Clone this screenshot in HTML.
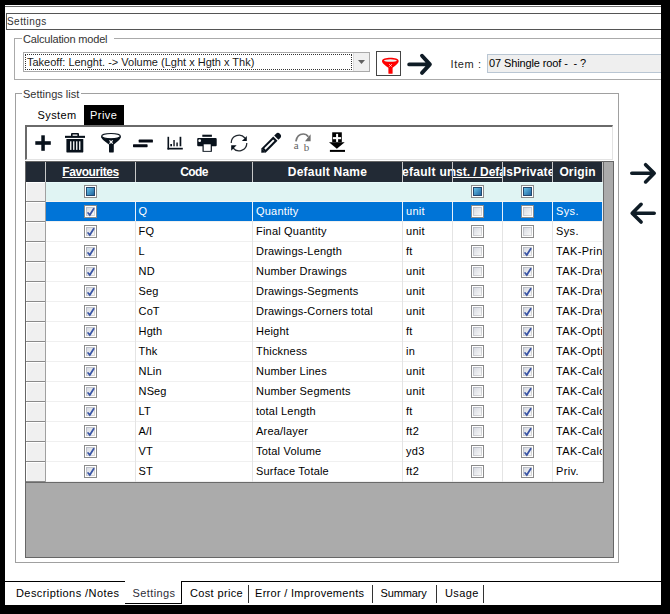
<!DOCTYPE html><html><head><meta charset="utf-8"><style>
html,body{margin:0;padding:0;width:670px;height:614px;overflow:hidden;background:#000}
.a{position:absolute;box-sizing:content-box}
.t{position:absolute;white-space:pre;font-family:"Liberation Sans",sans-serif}
svg.a{overflow:visible}
</style></head><body>
<div class="a" style="left:5px;top:5px;width:656px;height:600px;background:#fff"></div>
<div class="a" style="left:5px;top:6px;width:656px;height:1px;background:#6d6d6d"></div>
<div class="a" style="left:6px;top:13px;width:700px;height:15px;border:1px solid #555"></div>
<div class="t" style="left:7px;top:14.54px;font-size:10px;line-height:14px;font-weight:400;color:#333;letter-spacing:0.45px">Settings</div>
<div class="a" style="left:14px;top:38px;width:700px;height:40px;border:1px solid #aaa"></div>
<div class="a" style="left:22px;top:32px;width:92px;height:12px;background:#fff"></div>
<div class="t" style="left:23px;top:31.69px;font-size:11px;line-height:15px;font-weight:400;color:#333;letter-spacing:-0.18px">Calculation model</div>
<div class="a" style="left:23px;top:52px;width:345px;height:18px;border:1px solid #aaa;background:#fff"></div>
<div class="a" style="left:25px;top:54px;width:325px;height:14px;border:1px dotted #333"></div>
<div class="t" style="left:27px;top:54.69px;font-size:11px;line-height:15px;font-weight:400;color:#1a1a1a;">Takeoff: Lenght. -&gt; Volume (Lght x Hgth x Thk)</div>
<div class="a" style="left:353px;top:53px;width:15px;height:18px;background:#f0f0f0;border-left:1px solid #ddd"></div>
<svg class="a" style="left:358px;top:60px" width="7" height="4"><path d="M0 0H7L3.5 4Z" fill="#606060"/></svg>
<div class="a" style="left:376px;top:51px;width:23px;height:23px;border:1px solid #444;background:#fff"></div>
<svg class="a" style="left:0;top:0" width="670" height="614" viewBox="0 0 670 614">
<path d="M382 61.2 C382 58.6 386 57.8 390.4 57.8 C394.8 57.8 398.7 58.6 398.7 61.2 C398.7 62.4 396.6 65 392.6 67.8 V73.2 Q392.6 73.8 392 73.8 H389 Q388.4 73.8 388.4 73.2 V67.8 C384.2 65 382 62.4 382 61.2 Z" fill="#f00"/>
<ellipse cx="390.4" cy="60.6" rx="6.5" ry="1.25" fill="#e8f4f4"/>
<path d="M389.1 64.1 L391.9 66.9 M391.9 64.1 L389.1 66.9" stroke="#fff" stroke-width="0.9" stroke-dasharray="1 0.6"/>
</svg>
<svg class="a" style="left:405px;top:52px" width="30" height="25" viewBox="0 0 30 25">
<path d="M4.2 12.4 H24 M17 3.8 L24.9 12.4 L17 20.9" stroke="#0f1c26" stroke-width="3.9" fill="none" stroke-linecap="round" stroke-linejoin="round"/>
</svg>
<div class="t" style="left:450.5px;top:56.69px;font-size:11px;line-height:15px;font-weight:400;color:#1e1e1e;letter-spacing:0.6px">Item :</div>
<div class="a" style="left:487px;top:54px;width:200px;height:17px;border:1px solid #b9c6d3;background:#efefef"></div>
<div class="t" style="left:489px;top:55.69px;font-size:11px;line-height:15px;font-weight:400;color:#000;letter-spacing:-0.12px">07 Shingle roof -&nbsp; - ?</div>
<div class="a" style="left:15px;top:93px;width:602px;height:468px;border:1px solid #a0a0a0"></div>
<div class="a" style="left:22px;top:87px;width:59px;height:12px;background:#fff"></div>
<div class="t" style="left:23px;top:86.69px;font-size:11px;line-height:15px;font-weight:400;color:#333;">Settings list</div>
<div class="t" style="left:37.5px;top:107.69px;font-size:11px;line-height:15px;font-weight:400;color:#000;letter-spacing:0.4px">System</div>
<div class="a" style="left:84px;top:105px;width:40px;height:20px;background:#000"></div>
<div class="t" style="left:90px;top:107.69px;font-size:11px;line-height:15px;font-weight:400;color:#fff;letter-spacing:0.45px">Prive</div>
<div class="a" style="left:25px;top:125px;width:585px;height:32px;border-top:2px solid #6a6a6a;border-left:2px solid #6a6a6a;border-right:1px solid #e3e3e3;border-bottom:1px solid #e3e3e3;background:#fff"></div>
<svg class="a" style="left:0;top:0" width="670" height="614" viewBox="0 0 670 614">
<g fill="#08111b">
<rect x="35.3" y="141.2" width="15.5" height="3.6"/>
<rect x="41.3" y="135.3" width="3.5" height="15.5"/>
</g>
<g fill="#08111b">
<path d="M71 136 V134 Q71 133 72 133 H78 Q79 133 79 134 V136 Z M72.6 134.6 V136 H77.4 V134.6 Z" fill-rule="evenodd"/>
<rect x="65" y="135.8" width="20" height="2.1"/>
<path d="M66.4 139 H83.3 V151.4 Q83.3 152.6 82.1 152.6 H67.6 Q66.4 152.6 66.4 151.4 Z"/>
</g>
<g fill="#fff"><rect x="70.1" y="141.3" width="1.3" height="8.6"/><rect x="73.1" y="141.3" width="1.3" height="8.6"/><rect x="76.1" y="141.3" width="1.3" height="8.6"/><rect x="79.1" y="141.3" width="1.3" height="8.6"/></g>
<g>
<path d="M101 136.2 C101 139.5 106.5 142 109 144.6 V151.4 Q109 152.6 110.2 152.6 H112.6 Q113.8 152.6 113.8 151.4 V144.6 C116.3 142 121 139.5 121 136.2 Z" fill="#08111b"/>
<ellipse cx="111" cy="136.1" rx="9.3" ry="2.6" fill="#fff" stroke="#08111b" stroke-width="1.1"/>
<path d="M109.5 140.4 L112.7 143.6 M112.7 140.4 L109.5 143.6" stroke="#fff" stroke-width="1.3"/>
</g>
<g fill="#050a14">
<rect x="138.7" y="139.6" width="14.2" height="2.9" rx="0.6"/>
<rect x="133" y="144.3" width="14.6" height="2.9" rx="0.6"/>
</g>
<g fill="#08111b">
<rect x="167.5" y="136.8" width="1.6" height="12.7"/>
<rect x="167.5" y="147.8" width="15.3" height="1.7"/>
<rect x="170.3" y="144" width="1.7" height="2.3"/>
<rect x="173.2" y="140" width="1.7" height="6.3" fill="#3a3f46"/>
<rect x="176.2" y="142.5" width="1.8" height="3.8" fill="#3a3f46"/>
<rect x="179.6" y="136.8" width="1.7" height="9.5"/>
</g>
<g fill="#08111b">
<rect x="202.3" y="134.7" width="9.6" height="2.1"/>
<rect x="197.2" y="138" width="19.5" height="8.3" rx="1"/>
<rect x="202.5" y="143.8" width="9.4" height="8" />
</g>
<rect x="203.7" y="144.3" width="7" height="6.6" fill="#fff"/>
<circle cx="199.7" cy="140.7" r="1.35" fill="#fff"/>
<g stroke="#22282f" stroke-width="1.25" fill="none">
<path d="M231.2 143 A7.8 7.8 0 0 1 244.97 137.99"/>
<path d="M246.8 143 A7.8 7.8 0 0 1 233.03 148.01"/>
</g>
<g fill="#08111b">
<path d="M246.8 136 V140.9 H241.9 Z"/>
<path d="M231.2 145.3 H236.6 L231.2 150.8 Z"/>
</g>
<g transform="translate(271.15 142.8) rotate(-45)">
<path d="M-10.8 -3 L-13.9 0 L-10.8 3 Z" fill="#08111b"/>
<rect x="-10.9" y="-3" width="16.9" height="6" fill="#08111b"/>
<rect x="-8.8" y="-0.95" width="12.6" height="1.9" fill="#fff"/>
<path d="M7.3 -3 H9.6 A3 3 0 0 1 9.6 3 H7.3 Z" fill="#08111b"/>
</g>
<g fill="#7a7a7a">
<path d="M295.9 141.3 Q297.2 134 303.2 134 Q306.5 134 308.3 136.8" stroke="#777" stroke-width="1.7" fill="none"/>
<path d="M310.6 134.3 V141.2 H305 Z" fill="#6e6e6e"/>
</g>
<text x="293.8" y="148.7" font-family="Liberation Serif" font-size="11" fill="#606060">a</text>
<text x="303.8" y="151" font-family="Liberation Serif" font-size="11" fill="#606060">b</text>
<g fill="#000">
<rect x="332.2" y="132.3" width="9.6" height="10"/>
<path d="M329 142.2 H344.7 L336.85 148.7 Z"/>
<rect x="329.9" y="149.9" width="15.1" height="2"/>
</g>
<g fill="#fff"><rect x="332.9" y="137.1" width="8.2" height="2.1"/><rect x="336.1" y="133.9" width="2" height="8"/></g>
</svg>
<div class="a" style="left:25px;top:161px;width:587px;height:395px;border:1px solid #666;background:#ababab"></div>
<div class="a" style="left:26px;top:162px;width:577px;height:20px;background:#222a35"></div>
<div class="a" style="left:45px;top:162px;width:1px;height:20px;background:#c8c8c8"></div>
<div class="a" style="left:135px;top:162px;width:1px;height:20px;background:#c8c8c8"></div>
<div class="a" style="left:252px;top:162px;width:1px;height:20px;background:#c8c8c8"></div>
<div class="a" style="left:402px;top:162px;width:1px;height:20px;background:#c8c8c8"></div>
<div class="a" style="left:452px;top:162px;width:1px;height:20px;background:#c8c8c8"></div>
<div class="a" style="left:502px;top:162px;width:1px;height:20px;background:#c8c8c8"></div>
<div class="a" style="left:552px;top:162px;width:1px;height:20px;background:#c8c8c8"></div>
<div class="a" style="left:602px;top:162px;width:1px;height:20px;background:#c8c8c8"></div>
<div class="a" style="left:46px;top:162px;width:89px;height:20px;overflow:hidden"><div class="t" style="left:-105.5px;top:1.84px;font-size:12px;line-height:16px;font-weight:700;color:#fff;width:300px;text-align:center;white-space:nowrap;text-decoration:underline;letter-spacing:-0.43px">Favourites</div></div>
<div class="a" style="left:136px;top:162px;width:116px;height:20px;overflow:hidden"><div class="t" style="left:-92.0px;top:1.84px;font-size:12px;line-height:16px;font-weight:700;color:#fff;width:300px;text-align:center;white-space:nowrap;letter-spacing:-0.6px">Code</div></div>
<div class="a" style="left:253px;top:162px;width:149px;height:20px;overflow:hidden"><div class="t" style="left:-75.5px;top:1.84px;font-size:12px;line-height:16px;font-weight:700;color:#fff;width:300px;text-align:center;white-space:nowrap;letter-spacing:0.22px">Default Name</div></div>
<div class="a" style="left:403px;top:162px;width:49px;height:20px;overflow:hidden"><div class="t" style="left:-10px;top:1.84px;font-size:12px;line-height:16px;font-weight:700;color:#fff;white-space:nowrap;letter-spacing:0.3px">Default unit</div></div>
<div class="a" style="left:453px;top:162px;width:49px;height:20px;overflow:hidden"><div class="t" style="left:-7.699999999999989px;top:1.84px;font-size:12px;line-height:16px;font-weight:700;color:#fff;white-space:nowrap;text-decoration:underline;letter-spacing:0px">Inst. / Default</div></div>
<div class="a" style="left:503px;top:162px;width:49px;height:20px;overflow:hidden"><div class="t" style="left:-0.19999999999998863px;top:1.84px;font-size:12px;line-height:16px;font-weight:700;color:#fff;white-space:nowrap;letter-spacing:0.2px">IsPrivate</div></div>
<div class="a" style="left:553px;top:162px;width:49px;height:20px;overflow:hidden"><div class="t" style="left:-125.5px;top:1.84px;font-size:12px;line-height:16px;font-weight:700;color:#fff;width:300px;text-align:center;white-space:nowrap;letter-spacing:0.15px">Origin</div></div>
<div class="a" style="left:26px;top:182px;width:577px;height:300px;background:#fff"></div>
<div class="a" style="left:46px;top:182px;width:557px;height:19px;background:#e0f4f3"></div>
<div class="a" style="left:26px;top:182px;width:19px;height:19px;background:#f0f0f0;border-top:1px solid #fff;border-left:1px solid #fff;box-sizing:border-box"></div>
<div class="a" style="left:26px;top:201px;width:20px;height:1px;background:#8a8a8a"></div>
<div class="a" style="left:26px;top:202px;width:19px;height:19px;background:#f0f0f0;border-top:1px solid #fff;border-left:1px solid #fff;box-sizing:border-box"></div>
<div class="a" style="left:26px;top:221px;width:20px;height:1px;background:#8a8a8a"></div>
<div class="a" style="left:26px;top:222px;width:19px;height:19px;background:#f0f0f0;border-top:1px solid #fff;border-left:1px solid #fff;box-sizing:border-box"></div>
<div class="a" style="left:26px;top:241px;width:20px;height:1px;background:#8a8a8a"></div>
<div class="a" style="left:26px;top:242px;width:19px;height:19px;background:#f0f0f0;border-top:1px solid #fff;border-left:1px solid #fff;box-sizing:border-box"></div>
<div class="a" style="left:26px;top:261px;width:20px;height:1px;background:#8a8a8a"></div>
<div class="a" style="left:26px;top:262px;width:19px;height:19px;background:#f0f0f0;border-top:1px solid #fff;border-left:1px solid #fff;box-sizing:border-box"></div>
<div class="a" style="left:26px;top:281px;width:20px;height:1px;background:#8a8a8a"></div>
<div class="a" style="left:26px;top:282px;width:19px;height:19px;background:#f0f0f0;border-top:1px solid #fff;border-left:1px solid #fff;box-sizing:border-box"></div>
<div class="a" style="left:26px;top:301px;width:20px;height:1px;background:#8a8a8a"></div>
<div class="a" style="left:26px;top:302px;width:19px;height:19px;background:#f0f0f0;border-top:1px solid #fff;border-left:1px solid #fff;box-sizing:border-box"></div>
<div class="a" style="left:26px;top:321px;width:20px;height:1px;background:#8a8a8a"></div>
<div class="a" style="left:26px;top:322px;width:19px;height:19px;background:#f0f0f0;border-top:1px solid #fff;border-left:1px solid #fff;box-sizing:border-box"></div>
<div class="a" style="left:26px;top:341px;width:20px;height:1px;background:#8a8a8a"></div>
<div class="a" style="left:26px;top:342px;width:19px;height:19px;background:#f0f0f0;border-top:1px solid #fff;border-left:1px solid #fff;box-sizing:border-box"></div>
<div class="a" style="left:26px;top:361px;width:20px;height:1px;background:#8a8a8a"></div>
<div class="a" style="left:26px;top:362px;width:19px;height:19px;background:#f0f0f0;border-top:1px solid #fff;border-left:1px solid #fff;box-sizing:border-box"></div>
<div class="a" style="left:26px;top:381px;width:20px;height:1px;background:#8a8a8a"></div>
<div class="a" style="left:26px;top:382px;width:19px;height:19px;background:#f0f0f0;border-top:1px solid #fff;border-left:1px solid #fff;box-sizing:border-box"></div>
<div class="a" style="left:26px;top:401px;width:20px;height:1px;background:#8a8a8a"></div>
<div class="a" style="left:26px;top:402px;width:19px;height:19px;background:#f0f0f0;border-top:1px solid #fff;border-left:1px solid #fff;box-sizing:border-box"></div>
<div class="a" style="left:26px;top:421px;width:20px;height:1px;background:#8a8a8a"></div>
<div class="a" style="left:26px;top:422px;width:19px;height:19px;background:#f0f0f0;border-top:1px solid #fff;border-left:1px solid #fff;box-sizing:border-box"></div>
<div class="a" style="left:26px;top:441px;width:20px;height:1px;background:#8a8a8a"></div>
<div class="a" style="left:26px;top:442px;width:19px;height:19px;background:#f0f0f0;border-top:1px solid #fff;border-left:1px solid #fff;box-sizing:border-box"></div>
<div class="a" style="left:26px;top:461px;width:20px;height:1px;background:#8a8a8a"></div>
<div class="a" style="left:26px;top:462px;width:19px;height:19px;background:#f0f0f0;border-top:1px solid #fff;border-left:1px solid #fff;box-sizing:border-box"></div>
<div class="a" style="left:26px;top:481px;width:20px;height:1px;background:#8a8a8a"></div>
<div class="a" style="left:45px;top:182px;width:1px;height:300px;background:#a0a0a0"></div>
<div class="a" style="left:46px;top:221px;width:557px;height:1px;background:#f0f0f0"></div>
<div class="a" style="left:46px;top:241px;width:557px;height:1px;background:#f0f0f0"></div>
<div class="a" style="left:46px;top:261px;width:557px;height:1px;background:#f0f0f0"></div>
<div class="a" style="left:46px;top:281px;width:557px;height:1px;background:#f0f0f0"></div>
<div class="a" style="left:46px;top:301px;width:557px;height:1px;background:#f0f0f0"></div>
<div class="a" style="left:46px;top:321px;width:557px;height:1px;background:#f0f0f0"></div>
<div class="a" style="left:46px;top:341px;width:557px;height:1px;background:#f0f0f0"></div>
<div class="a" style="left:46px;top:361px;width:557px;height:1px;background:#f0f0f0"></div>
<div class="a" style="left:46px;top:381px;width:557px;height:1px;background:#f0f0f0"></div>
<div class="a" style="left:46px;top:401px;width:557px;height:1px;background:#f0f0f0"></div>
<div class="a" style="left:46px;top:421px;width:557px;height:1px;background:#f0f0f0"></div>
<div class="a" style="left:46px;top:441px;width:557px;height:1px;background:#f0f0f0"></div>
<div class="a" style="left:46px;top:461px;width:557px;height:1px;background:#f0f0f0"></div>
<div class="a" style="left:46px;top:481px;width:557px;height:1px;background:#f0f0f0"></div>
<div class="a" style="left:46px;top:201px;width:557px;height:1px;background:#f7f5f0"></div>
<div class="a" style="left:46px;top:182px;width:557px;height:1px;background:#e9fbfb"></div>
<div class="a" style="left:46px;top:202px;width:556px;height:19px;background:#0074d7"></div>
<div class="a" style="left:135px;top:202px;width:1px;height:280px;background:#e4e4e4"></div>
<div class="a" style="left:252px;top:202px;width:1px;height:280px;background:#e4e4e4"></div>
<div class="a" style="left:402px;top:202px;width:1px;height:280px;background:#e4e4e4"></div>
<div class="a" style="left:452px;top:202px;width:1px;height:280px;background:#e4e4e4"></div>
<div class="a" style="left:502px;top:202px;width:1px;height:280px;background:#e4e4e4"></div>
<div class="a" style="left:552px;top:202px;width:1px;height:280px;background:#e4e4e4"></div>
<div class="a" style="left:602px;top:202px;width:1px;height:280px;background:#e4e4e4"></div>
<div class="a" style="left:135px;top:202px;width:1px;height:19px;background:#e8f1fb"></div>
<div class="a" style="left:252px;top:202px;width:1px;height:19px;background:#e8f1fb"></div>
<div class="a" style="left:402px;top:202px;width:1px;height:19px;background:#e8f1fb"></div>
<div class="a" style="left:452px;top:202px;width:1px;height:19px;background:#e8f1fb"></div>
<div class="a" style="left:502px;top:202px;width:1px;height:19px;background:#e8f1fb"></div>
<div class="a" style="left:552px;top:202px;width:1px;height:19px;background:#e8f1fb"></div>
<div class="a" style="left:602px;top:202px;width:1px;height:19px;background:#e8f1fb"></div>
<div class="a" style="left:603px;top:162px;width:1px;height:321px;background:#6a6a6a"></div>
<div class="a" style="left:26px;top:482px;width:578px;height:1px;background:#6a6a6a"></div>
<svg width="0" height="0" style="position:absolute"><defs>
<linearGradient id="gi" x1="0" y1="0" x2="1" y2="1"><stop offset="0" stop-color="#6cc8ee"/><stop offset="1" stop-color="#1a5f9a"/></linearGradient>
<linearGradient id="gc" x1="0" y1="0" x2="1" y2="1"><stop offset="0" stop-color="#d6d9e0"/><stop offset="1" stop-color="#fafafa"/></linearGradient><linearGradient id="gs" x1="0" y1="0" x2="1" y2="1"><stop offset="0" stop-color="#b8bcc6"/><stop offset="1" stop-color="#d8d8d8"/></linearGradient>
</defs></svg>
<svg class="a" style="left:84px;top:185px" width="13" height="13" viewBox="0 0 13 13"><rect x="0.5" y="0.5" width="12" height="12" fill="#fff" stroke="#8a8a8a"/><rect x="2.5" y="2.5" width="8" height="8" fill="url(#gi)" stroke="#23486e" stroke-width="1"/></svg>
<svg class="a" style="left:471px;top:185px" width="13" height="13" viewBox="0 0 13 13"><rect x="0.5" y="0.5" width="12" height="12" fill="#fff" stroke="#8a8a8a"/><rect x="2.5" y="2.5" width="8" height="8" fill="url(#gi)" stroke="#23486e" stroke-width="1"/></svg>
<svg class="a" style="left:521px;top:185px" width="13" height="13" viewBox="0 0 13 13"><rect x="0.5" y="0.5" width="12" height="12" fill="#fff" stroke="#8a8a8a"/><rect x="2.5" y="2.5" width="8" height="8" fill="url(#gi)" stroke="#23486e" stroke-width="1"/></svg>
<svg class="a" style="left:84px;top:205px" width="13" height="13" viewBox="0 0 13 13"><rect x="0.5" y="0.5" width="12" height="12" fill="#fff" stroke="#8a8a8a"/><rect x="2.5" y="2.5" width="8" height="8" fill="url(#gc)" stroke="url(#gs)" stroke-width="1"/><path d="M4.1 8 L5.8 10 L9.7 3.7" stroke="#3a55a5" stroke-width="1.8" fill="none" stroke-linecap="round" stroke-linejoin="miter"/></svg>
<svg class="a" style="left:471px;top:205px" width="13" height="13" viewBox="0 0 13 13"><rect x="0.5" y="0.5" width="12" height="12" fill="#fff" stroke="#8a8a8a"/><rect x="2.5" y="2.5" width="8" height="8" fill="url(#gc)" stroke="url(#gs)" stroke-width="1"/></svg>
<svg class="a" style="left:521px;top:205px" width="13" height="13" viewBox="0 0 13 13"><rect x="0.5" y="0.5" width="12" height="12" fill="#fff" stroke="#8a8a8a"/><rect x="2.5" y="2.5" width="8" height="8" fill="url(#gc)" stroke="url(#gs)" stroke-width="1"/></svg>
<div class="t" style="left:138.6px;top:203.69px;font-size:11px;line-height:15px;font-weight:400;color:#fff;letter-spacing:0.1px">Q</div>
<div class="t" style="left:256px;top:203.69px;font-size:11px;line-height:15px;font-weight:400;color:#fff;letter-spacing:0.2px">Quantity</div>
<div class="t" style="left:406px;top:203.69px;font-size:11px;line-height:15px;font-weight:400;color:#fff;letter-spacing:0.3px">unit</div>
<div class="a" style="left:553px;top:202px;width:49px;height:19px;overflow:hidden"><div class="t" style="left:3px;top:1.69px;font-size:11px;line-height:15px;font-weight:400;color:#fff;white-space:nowrap;letter-spacing:0.35px">Sys.</div></div>
<svg class="a" style="left:84px;top:225px" width="13" height="13" viewBox="0 0 13 13"><rect x="0.5" y="0.5" width="12" height="12" fill="#fff" stroke="#8a8a8a"/><rect x="2.5" y="2.5" width="8" height="8" fill="url(#gc)" stroke="url(#gs)" stroke-width="1"/><path d="M4.1 8 L5.8 10 L9.7 3.7" stroke="#3a55a5" stroke-width="1.8" fill="none" stroke-linecap="round" stroke-linejoin="miter"/></svg>
<svg class="a" style="left:471px;top:225px" width="13" height="13" viewBox="0 0 13 13"><rect x="0.5" y="0.5" width="12" height="12" fill="#fff" stroke="#8a8a8a"/><rect x="2.5" y="2.5" width="8" height="8" fill="url(#gc)" stroke="url(#gs)" stroke-width="1"/></svg>
<svg class="a" style="left:521px;top:225px" width="13" height="13" viewBox="0 0 13 13"><rect x="0.5" y="0.5" width="12" height="12" fill="#fff" stroke="#8a8a8a"/><rect x="2.5" y="2.5" width="8" height="8" fill="url(#gc)" stroke="url(#gs)" stroke-width="1"/></svg>
<div class="t" style="left:138.6px;top:223.69px;font-size:11px;line-height:15px;font-weight:400;color:#000;letter-spacing:0.1px">FQ</div>
<div class="t" style="left:256px;top:223.69px;font-size:11px;line-height:15px;font-weight:400;color:#000;letter-spacing:0.2px">Final Quantity</div>
<div class="t" style="left:406px;top:223.69px;font-size:11px;line-height:15px;font-weight:400;color:#000;letter-spacing:0.3px">unit</div>
<div class="a" style="left:553px;top:222px;width:49px;height:19px;overflow:hidden"><div class="t" style="left:3px;top:1.69px;font-size:11px;line-height:15px;font-weight:400;color:#000;white-space:nowrap;letter-spacing:0.35px">Sys.</div></div>
<svg class="a" style="left:84px;top:245px" width="13" height="13" viewBox="0 0 13 13"><rect x="0.5" y="0.5" width="12" height="12" fill="#fff" stroke="#8a8a8a"/><rect x="2.5" y="2.5" width="8" height="8" fill="url(#gc)" stroke="url(#gs)" stroke-width="1"/><path d="M4.1 8 L5.8 10 L9.7 3.7" stroke="#3a55a5" stroke-width="1.8" fill="none" stroke-linecap="round" stroke-linejoin="miter"/></svg>
<svg class="a" style="left:471px;top:245px" width="13" height="13" viewBox="0 0 13 13"><rect x="0.5" y="0.5" width="12" height="12" fill="#fff" stroke="#8a8a8a"/><rect x="2.5" y="2.5" width="8" height="8" fill="url(#gc)" stroke="url(#gs)" stroke-width="1"/></svg>
<svg class="a" style="left:521px;top:245px" width="13" height="13" viewBox="0 0 13 13"><rect x="0.5" y="0.5" width="12" height="12" fill="#fff" stroke="#8a8a8a"/><rect x="2.5" y="2.5" width="8" height="8" fill="url(#gc)" stroke="url(#gs)" stroke-width="1"/><path d="M4.1 8 L5.8 10 L9.7 3.7" stroke="#3a55a5" stroke-width="1.8" fill="none" stroke-linecap="round" stroke-linejoin="miter"/></svg>
<div class="t" style="left:138.6px;top:243.69px;font-size:11px;line-height:15px;font-weight:400;color:#000;letter-spacing:0.1px">L</div>
<div class="t" style="left:256px;top:243.69px;font-size:11px;line-height:15px;font-weight:400;color:#000;letter-spacing:0.2px">Drawings-Length</div>
<div class="t" style="left:406px;top:243.69px;font-size:11px;line-height:15px;font-weight:400;color:#000;letter-spacing:0.3px">ft</div>
<div class="a" style="left:553px;top:242px;width:49px;height:19px;overflow:hidden"><div class="t" style="left:3px;top:1.69px;font-size:11px;line-height:15px;font-weight:400;color:#000;white-space:nowrap;letter-spacing:0.35px">TAK-Princ</div></div>
<svg class="a" style="left:84px;top:265px" width="13" height="13" viewBox="0 0 13 13"><rect x="0.5" y="0.5" width="12" height="12" fill="#fff" stroke="#8a8a8a"/><rect x="2.5" y="2.5" width="8" height="8" fill="url(#gc)" stroke="url(#gs)" stroke-width="1"/><path d="M4.1 8 L5.8 10 L9.7 3.7" stroke="#3a55a5" stroke-width="1.8" fill="none" stroke-linecap="round" stroke-linejoin="miter"/></svg>
<svg class="a" style="left:471px;top:265px" width="13" height="13" viewBox="0 0 13 13"><rect x="0.5" y="0.5" width="12" height="12" fill="#fff" stroke="#8a8a8a"/><rect x="2.5" y="2.5" width="8" height="8" fill="url(#gc)" stroke="url(#gs)" stroke-width="1"/></svg>
<svg class="a" style="left:521px;top:265px" width="13" height="13" viewBox="0 0 13 13"><rect x="0.5" y="0.5" width="12" height="12" fill="#fff" stroke="#8a8a8a"/><rect x="2.5" y="2.5" width="8" height="8" fill="url(#gc)" stroke="url(#gs)" stroke-width="1"/><path d="M4.1 8 L5.8 10 L9.7 3.7" stroke="#3a55a5" stroke-width="1.8" fill="none" stroke-linecap="round" stroke-linejoin="miter"/></svg>
<div class="t" style="left:138.6px;top:263.69px;font-size:11px;line-height:15px;font-weight:400;color:#000;letter-spacing:0.1px">ND</div>
<div class="t" style="left:256px;top:263.69px;font-size:11px;line-height:15px;font-weight:400;color:#000;letter-spacing:0.2px">Number Drawings</div>
<div class="t" style="left:406px;top:263.69px;font-size:11px;line-height:15px;font-weight:400;color:#000;letter-spacing:0.3px">unit</div>
<div class="a" style="left:553px;top:262px;width:49px;height:19px;overflow:hidden"><div class="t" style="left:3px;top:1.69px;font-size:11px;line-height:15px;font-weight:400;color:#000;white-space:nowrap;letter-spacing:0.35px">TAK-Draw</div></div>
<svg class="a" style="left:84px;top:285px" width="13" height="13" viewBox="0 0 13 13"><rect x="0.5" y="0.5" width="12" height="12" fill="#fff" stroke="#8a8a8a"/><rect x="2.5" y="2.5" width="8" height="8" fill="url(#gc)" stroke="url(#gs)" stroke-width="1"/><path d="M4.1 8 L5.8 10 L9.7 3.7" stroke="#3a55a5" stroke-width="1.8" fill="none" stroke-linecap="round" stroke-linejoin="miter"/></svg>
<svg class="a" style="left:471px;top:285px" width="13" height="13" viewBox="0 0 13 13"><rect x="0.5" y="0.5" width="12" height="12" fill="#fff" stroke="#8a8a8a"/><rect x="2.5" y="2.5" width="8" height="8" fill="url(#gc)" stroke="url(#gs)" stroke-width="1"/></svg>
<svg class="a" style="left:521px;top:285px" width="13" height="13" viewBox="0 0 13 13"><rect x="0.5" y="0.5" width="12" height="12" fill="#fff" stroke="#8a8a8a"/><rect x="2.5" y="2.5" width="8" height="8" fill="url(#gc)" stroke="url(#gs)" stroke-width="1"/><path d="M4.1 8 L5.8 10 L9.7 3.7" stroke="#3a55a5" stroke-width="1.8" fill="none" stroke-linecap="round" stroke-linejoin="miter"/></svg>
<div class="t" style="left:138.6px;top:283.69px;font-size:11px;line-height:15px;font-weight:400;color:#000;letter-spacing:0.1px">Seg</div>
<div class="t" style="left:256px;top:283.69px;font-size:11px;line-height:15px;font-weight:400;color:#000;letter-spacing:0.2px">Drawings-Segments</div>
<div class="t" style="left:406px;top:283.69px;font-size:11px;line-height:15px;font-weight:400;color:#000;letter-spacing:0.3px">unit</div>
<div class="a" style="left:553px;top:282px;width:49px;height:19px;overflow:hidden"><div class="t" style="left:3px;top:1.69px;font-size:11px;line-height:15px;font-weight:400;color:#000;white-space:nowrap;letter-spacing:0.35px">TAK-Draw</div></div>
<svg class="a" style="left:84px;top:305px" width="13" height="13" viewBox="0 0 13 13"><rect x="0.5" y="0.5" width="12" height="12" fill="#fff" stroke="#8a8a8a"/><rect x="2.5" y="2.5" width="8" height="8" fill="url(#gc)" stroke="url(#gs)" stroke-width="1"/><path d="M4.1 8 L5.8 10 L9.7 3.7" stroke="#3a55a5" stroke-width="1.8" fill="none" stroke-linecap="round" stroke-linejoin="miter"/></svg>
<svg class="a" style="left:471px;top:305px" width="13" height="13" viewBox="0 0 13 13"><rect x="0.5" y="0.5" width="12" height="12" fill="#fff" stroke="#8a8a8a"/><rect x="2.5" y="2.5" width="8" height="8" fill="url(#gc)" stroke="url(#gs)" stroke-width="1"/></svg>
<svg class="a" style="left:521px;top:305px" width="13" height="13" viewBox="0 0 13 13"><rect x="0.5" y="0.5" width="12" height="12" fill="#fff" stroke="#8a8a8a"/><rect x="2.5" y="2.5" width="8" height="8" fill="url(#gc)" stroke="url(#gs)" stroke-width="1"/><path d="M4.1 8 L5.8 10 L9.7 3.7" stroke="#3a55a5" stroke-width="1.8" fill="none" stroke-linecap="round" stroke-linejoin="miter"/></svg>
<div class="t" style="left:138.6px;top:303.69px;font-size:11px;line-height:15px;font-weight:400;color:#000;letter-spacing:0.1px">CoT</div>
<div class="t" style="left:256px;top:303.69px;font-size:11px;line-height:15px;font-weight:400;color:#000;letter-spacing:0.2px">Drawings-Corners total</div>
<div class="t" style="left:406px;top:303.69px;font-size:11px;line-height:15px;font-weight:400;color:#000;letter-spacing:0.3px">unit</div>
<div class="a" style="left:553px;top:302px;width:49px;height:19px;overflow:hidden"><div class="t" style="left:3px;top:1.69px;font-size:11px;line-height:15px;font-weight:400;color:#000;white-space:nowrap;letter-spacing:0.35px">TAK-Draw</div></div>
<svg class="a" style="left:84px;top:325px" width="13" height="13" viewBox="0 0 13 13"><rect x="0.5" y="0.5" width="12" height="12" fill="#fff" stroke="#8a8a8a"/><rect x="2.5" y="2.5" width="8" height="8" fill="url(#gc)" stroke="url(#gs)" stroke-width="1"/><path d="M4.1 8 L5.8 10 L9.7 3.7" stroke="#3a55a5" stroke-width="1.8" fill="none" stroke-linecap="round" stroke-linejoin="miter"/></svg>
<svg class="a" style="left:471px;top:325px" width="13" height="13" viewBox="0 0 13 13"><rect x="0.5" y="0.5" width="12" height="12" fill="#fff" stroke="#8a8a8a"/><rect x="2.5" y="2.5" width="8" height="8" fill="url(#gc)" stroke="url(#gs)" stroke-width="1"/></svg>
<svg class="a" style="left:521px;top:325px" width="13" height="13" viewBox="0 0 13 13"><rect x="0.5" y="0.5" width="12" height="12" fill="#fff" stroke="#8a8a8a"/><rect x="2.5" y="2.5" width="8" height="8" fill="url(#gc)" stroke="url(#gs)" stroke-width="1"/><path d="M4.1 8 L5.8 10 L9.7 3.7" stroke="#3a55a5" stroke-width="1.8" fill="none" stroke-linecap="round" stroke-linejoin="miter"/></svg>
<div class="t" style="left:138.6px;top:323.69px;font-size:11px;line-height:15px;font-weight:400;color:#000;letter-spacing:0.1px">Hgth</div>
<div class="t" style="left:256px;top:323.69px;font-size:11px;line-height:15px;font-weight:400;color:#000;letter-spacing:0.2px">Height</div>
<div class="t" style="left:406px;top:323.69px;font-size:11px;line-height:15px;font-weight:400;color:#000;letter-spacing:0.3px">ft</div>
<div class="a" style="left:553px;top:322px;width:49px;height:19px;overflow:hidden"><div class="t" style="left:3px;top:1.69px;font-size:11px;line-height:15px;font-weight:400;color:#000;white-space:nowrap;letter-spacing:0.35px">TAK-Optio</div></div>
<svg class="a" style="left:84px;top:345px" width="13" height="13" viewBox="0 0 13 13"><rect x="0.5" y="0.5" width="12" height="12" fill="#fff" stroke="#8a8a8a"/><rect x="2.5" y="2.5" width="8" height="8" fill="url(#gc)" stroke="url(#gs)" stroke-width="1"/><path d="M4.1 8 L5.8 10 L9.7 3.7" stroke="#3a55a5" stroke-width="1.8" fill="none" stroke-linecap="round" stroke-linejoin="miter"/></svg>
<svg class="a" style="left:471px;top:345px" width="13" height="13" viewBox="0 0 13 13"><rect x="0.5" y="0.5" width="12" height="12" fill="#fff" stroke="#8a8a8a"/><rect x="2.5" y="2.5" width="8" height="8" fill="url(#gc)" stroke="url(#gs)" stroke-width="1"/></svg>
<svg class="a" style="left:521px;top:345px" width="13" height="13" viewBox="0 0 13 13"><rect x="0.5" y="0.5" width="12" height="12" fill="#fff" stroke="#8a8a8a"/><rect x="2.5" y="2.5" width="8" height="8" fill="url(#gc)" stroke="url(#gs)" stroke-width="1"/><path d="M4.1 8 L5.8 10 L9.7 3.7" stroke="#3a55a5" stroke-width="1.8" fill="none" stroke-linecap="round" stroke-linejoin="miter"/></svg>
<div class="t" style="left:138.6px;top:343.69px;font-size:11px;line-height:15px;font-weight:400;color:#000;letter-spacing:0.1px">Thk</div>
<div class="t" style="left:256px;top:343.69px;font-size:11px;line-height:15px;font-weight:400;color:#000;letter-spacing:0.2px">Thickness</div>
<div class="t" style="left:406px;top:343.69px;font-size:11px;line-height:15px;font-weight:400;color:#000;letter-spacing:0.3px">in</div>
<div class="a" style="left:553px;top:342px;width:49px;height:19px;overflow:hidden"><div class="t" style="left:3px;top:1.69px;font-size:11px;line-height:15px;font-weight:400;color:#000;white-space:nowrap;letter-spacing:0.35px">TAK-Optio</div></div>
<svg class="a" style="left:84px;top:365px" width="13" height="13" viewBox="0 0 13 13"><rect x="0.5" y="0.5" width="12" height="12" fill="#fff" stroke="#8a8a8a"/><rect x="2.5" y="2.5" width="8" height="8" fill="url(#gc)" stroke="url(#gs)" stroke-width="1"/><path d="M4.1 8 L5.8 10 L9.7 3.7" stroke="#3a55a5" stroke-width="1.8" fill="none" stroke-linecap="round" stroke-linejoin="miter"/></svg>
<svg class="a" style="left:471px;top:365px" width="13" height="13" viewBox="0 0 13 13"><rect x="0.5" y="0.5" width="12" height="12" fill="#fff" stroke="#8a8a8a"/><rect x="2.5" y="2.5" width="8" height="8" fill="url(#gc)" stroke="url(#gs)" stroke-width="1"/></svg>
<svg class="a" style="left:521px;top:365px" width="13" height="13" viewBox="0 0 13 13"><rect x="0.5" y="0.5" width="12" height="12" fill="#fff" stroke="#8a8a8a"/><rect x="2.5" y="2.5" width="8" height="8" fill="url(#gc)" stroke="url(#gs)" stroke-width="1"/><path d="M4.1 8 L5.8 10 L9.7 3.7" stroke="#3a55a5" stroke-width="1.8" fill="none" stroke-linecap="round" stroke-linejoin="miter"/></svg>
<div class="t" style="left:138.6px;top:363.69px;font-size:11px;line-height:15px;font-weight:400;color:#000;letter-spacing:0.1px">NLin</div>
<div class="t" style="left:256px;top:363.69px;font-size:11px;line-height:15px;font-weight:400;color:#000;letter-spacing:0.2px">Number Lines</div>
<div class="t" style="left:406px;top:363.69px;font-size:11px;line-height:15px;font-weight:400;color:#000;letter-spacing:0.3px">unit</div>
<div class="a" style="left:553px;top:362px;width:49px;height:19px;overflow:hidden"><div class="t" style="left:3px;top:1.69px;font-size:11px;line-height:15px;font-weight:400;color:#000;white-space:nowrap;letter-spacing:0.35px">TAK-Calc</div></div>
<svg class="a" style="left:84px;top:385px" width="13" height="13" viewBox="0 0 13 13"><rect x="0.5" y="0.5" width="12" height="12" fill="#fff" stroke="#8a8a8a"/><rect x="2.5" y="2.5" width="8" height="8" fill="url(#gc)" stroke="url(#gs)" stroke-width="1"/><path d="M4.1 8 L5.8 10 L9.7 3.7" stroke="#3a55a5" stroke-width="1.8" fill="none" stroke-linecap="round" stroke-linejoin="miter"/></svg>
<svg class="a" style="left:471px;top:385px" width="13" height="13" viewBox="0 0 13 13"><rect x="0.5" y="0.5" width="12" height="12" fill="#fff" stroke="#8a8a8a"/><rect x="2.5" y="2.5" width="8" height="8" fill="url(#gc)" stroke="url(#gs)" stroke-width="1"/></svg>
<svg class="a" style="left:521px;top:385px" width="13" height="13" viewBox="0 0 13 13"><rect x="0.5" y="0.5" width="12" height="12" fill="#fff" stroke="#8a8a8a"/><rect x="2.5" y="2.5" width="8" height="8" fill="url(#gc)" stroke="url(#gs)" stroke-width="1"/><path d="M4.1 8 L5.8 10 L9.7 3.7" stroke="#3a55a5" stroke-width="1.8" fill="none" stroke-linecap="round" stroke-linejoin="miter"/></svg>
<div class="t" style="left:138.6px;top:383.69px;font-size:11px;line-height:15px;font-weight:400;color:#000;letter-spacing:0.1px">NSeg</div>
<div class="t" style="left:256px;top:383.69px;font-size:11px;line-height:15px;font-weight:400;color:#000;letter-spacing:0.2px">Number Segments</div>
<div class="t" style="left:406px;top:383.69px;font-size:11px;line-height:15px;font-weight:400;color:#000;letter-spacing:0.3px">unit</div>
<div class="a" style="left:553px;top:382px;width:49px;height:19px;overflow:hidden"><div class="t" style="left:3px;top:1.69px;font-size:11px;line-height:15px;font-weight:400;color:#000;white-space:nowrap;letter-spacing:0.35px">TAK-Calc</div></div>
<svg class="a" style="left:84px;top:405px" width="13" height="13" viewBox="0 0 13 13"><rect x="0.5" y="0.5" width="12" height="12" fill="#fff" stroke="#8a8a8a"/><rect x="2.5" y="2.5" width="8" height="8" fill="url(#gc)" stroke="url(#gs)" stroke-width="1"/><path d="M4.1 8 L5.8 10 L9.7 3.7" stroke="#3a55a5" stroke-width="1.8" fill="none" stroke-linecap="round" stroke-linejoin="miter"/></svg>
<svg class="a" style="left:471px;top:405px" width="13" height="13" viewBox="0 0 13 13"><rect x="0.5" y="0.5" width="12" height="12" fill="#fff" stroke="#8a8a8a"/><rect x="2.5" y="2.5" width="8" height="8" fill="url(#gc)" stroke="url(#gs)" stroke-width="1"/></svg>
<svg class="a" style="left:521px;top:405px" width="13" height="13" viewBox="0 0 13 13"><rect x="0.5" y="0.5" width="12" height="12" fill="#fff" stroke="#8a8a8a"/><rect x="2.5" y="2.5" width="8" height="8" fill="url(#gc)" stroke="url(#gs)" stroke-width="1"/><path d="M4.1 8 L5.8 10 L9.7 3.7" stroke="#3a55a5" stroke-width="1.8" fill="none" stroke-linecap="round" stroke-linejoin="miter"/></svg>
<div class="t" style="left:138.6px;top:403.69px;font-size:11px;line-height:15px;font-weight:400;color:#000;letter-spacing:0.1px">LT</div>
<div class="t" style="left:256px;top:403.69px;font-size:11px;line-height:15px;font-weight:400;color:#000;letter-spacing:0.2px">total Length</div>
<div class="t" style="left:406px;top:403.69px;font-size:11px;line-height:15px;font-weight:400;color:#000;letter-spacing:0.3px">ft</div>
<div class="a" style="left:553px;top:402px;width:49px;height:19px;overflow:hidden"><div class="t" style="left:3px;top:1.69px;font-size:11px;line-height:15px;font-weight:400;color:#000;white-space:nowrap;letter-spacing:0.35px">TAK-Calc</div></div>
<svg class="a" style="left:84px;top:425px" width="13" height="13" viewBox="0 0 13 13"><rect x="0.5" y="0.5" width="12" height="12" fill="#fff" stroke="#8a8a8a"/><rect x="2.5" y="2.5" width="8" height="8" fill="url(#gc)" stroke="url(#gs)" stroke-width="1"/><path d="M4.1 8 L5.8 10 L9.7 3.7" stroke="#3a55a5" stroke-width="1.8" fill="none" stroke-linecap="round" stroke-linejoin="miter"/></svg>
<svg class="a" style="left:471px;top:425px" width="13" height="13" viewBox="0 0 13 13"><rect x="0.5" y="0.5" width="12" height="12" fill="#fff" stroke="#8a8a8a"/><rect x="2.5" y="2.5" width="8" height="8" fill="url(#gc)" stroke="url(#gs)" stroke-width="1"/></svg>
<svg class="a" style="left:521px;top:425px" width="13" height="13" viewBox="0 0 13 13"><rect x="0.5" y="0.5" width="12" height="12" fill="#fff" stroke="#8a8a8a"/><rect x="2.5" y="2.5" width="8" height="8" fill="url(#gc)" stroke="url(#gs)" stroke-width="1"/><path d="M4.1 8 L5.8 10 L9.7 3.7" stroke="#3a55a5" stroke-width="1.8" fill="none" stroke-linecap="round" stroke-linejoin="miter"/></svg>
<div class="t" style="left:138.6px;top:423.69px;font-size:11px;line-height:15px;font-weight:400;color:#000;letter-spacing:0.1px">A/l</div>
<div class="t" style="left:256px;top:423.69px;font-size:11px;line-height:15px;font-weight:400;color:#000;letter-spacing:0.2px">Area/layer</div>
<div class="t" style="left:406px;top:423.69px;font-size:11px;line-height:15px;font-weight:400;color:#000;letter-spacing:0.3px">ft2</div>
<div class="a" style="left:553px;top:422px;width:49px;height:19px;overflow:hidden"><div class="t" style="left:3px;top:1.69px;font-size:11px;line-height:15px;font-weight:400;color:#000;white-space:nowrap;letter-spacing:0.35px">TAK-Calc</div></div>
<svg class="a" style="left:84px;top:445px" width="13" height="13" viewBox="0 0 13 13"><rect x="0.5" y="0.5" width="12" height="12" fill="#fff" stroke="#8a8a8a"/><rect x="2.5" y="2.5" width="8" height="8" fill="url(#gc)" stroke="url(#gs)" stroke-width="1"/><path d="M4.1 8 L5.8 10 L9.7 3.7" stroke="#3a55a5" stroke-width="1.8" fill="none" stroke-linecap="round" stroke-linejoin="miter"/></svg>
<svg class="a" style="left:471px;top:445px" width="13" height="13" viewBox="0 0 13 13"><rect x="0.5" y="0.5" width="12" height="12" fill="#fff" stroke="#8a8a8a"/><rect x="2.5" y="2.5" width="8" height="8" fill="url(#gc)" stroke="url(#gs)" stroke-width="1"/></svg>
<svg class="a" style="left:521px;top:445px" width="13" height="13" viewBox="0 0 13 13"><rect x="0.5" y="0.5" width="12" height="12" fill="#fff" stroke="#8a8a8a"/><rect x="2.5" y="2.5" width="8" height="8" fill="url(#gc)" stroke="url(#gs)" stroke-width="1"/><path d="M4.1 8 L5.8 10 L9.7 3.7" stroke="#3a55a5" stroke-width="1.8" fill="none" stroke-linecap="round" stroke-linejoin="miter"/></svg>
<div class="t" style="left:138.6px;top:443.69px;font-size:11px;line-height:15px;font-weight:400;color:#000;letter-spacing:0.1px">VT</div>
<div class="t" style="left:256px;top:443.69px;font-size:11px;line-height:15px;font-weight:400;color:#000;letter-spacing:0.2px">Total Volume</div>
<div class="t" style="left:406px;top:443.69px;font-size:11px;line-height:15px;font-weight:400;color:#000;letter-spacing:0.3px">yd3</div>
<div class="a" style="left:553px;top:442px;width:49px;height:19px;overflow:hidden"><div class="t" style="left:3px;top:1.69px;font-size:11px;line-height:15px;font-weight:400;color:#000;white-space:nowrap;letter-spacing:0.35px">TAK-Calc</div></div>
<svg class="a" style="left:84px;top:465px" width="13" height="13" viewBox="0 0 13 13"><rect x="0.5" y="0.5" width="12" height="12" fill="#fff" stroke="#8a8a8a"/><rect x="2.5" y="2.5" width="8" height="8" fill="url(#gc)" stroke="url(#gs)" stroke-width="1"/><path d="M4.1 8 L5.8 10 L9.7 3.7" stroke="#3a55a5" stroke-width="1.8" fill="none" stroke-linecap="round" stroke-linejoin="miter"/></svg>
<svg class="a" style="left:471px;top:465px" width="13" height="13" viewBox="0 0 13 13"><rect x="0.5" y="0.5" width="12" height="12" fill="#fff" stroke="#8a8a8a"/><rect x="2.5" y="2.5" width="8" height="8" fill="url(#gc)" stroke="url(#gs)" stroke-width="1"/></svg>
<svg class="a" style="left:521px;top:465px" width="13" height="13" viewBox="0 0 13 13"><rect x="0.5" y="0.5" width="12" height="12" fill="#fff" stroke="#8a8a8a"/><rect x="2.5" y="2.5" width="8" height="8" fill="url(#gc)" stroke="url(#gs)" stroke-width="1"/><path d="M4.1 8 L5.8 10 L9.7 3.7" stroke="#3a55a5" stroke-width="1.8" fill="none" stroke-linecap="round" stroke-linejoin="miter"/></svg>
<div class="t" style="left:138.6px;top:463.69px;font-size:11px;line-height:15px;font-weight:400;color:#000;letter-spacing:0.1px">ST</div>
<div class="t" style="left:256px;top:463.69px;font-size:11px;line-height:15px;font-weight:400;color:#000;letter-spacing:0.2px">Surface Totale</div>
<div class="t" style="left:406px;top:463.69px;font-size:11px;line-height:15px;font-weight:400;color:#000;letter-spacing:0.3px">ft2</div>
<div class="a" style="left:553px;top:462px;width:49px;height:19px;overflow:hidden"><div class="t" style="left:3px;top:1.69px;font-size:11px;line-height:15px;font-weight:400;color:#000;white-space:nowrap;letter-spacing:0.35px">Priv.</div></div>
<svg class="a" style="left:628px;top:160px" width="31" height="27" viewBox="0 0 31 27">
<path d="M3.8 13.3 H26 M17.6 4.7 L26.2 13.3 L17.6 21.9" stroke="#0f1c26" stroke-width="3.6" fill="none" stroke-linecap="round" stroke-linejoin="round"/></svg>
<svg class="a" style="left:628px;top:200px" width="31" height="27" viewBox="0 0 31 27">
<path d="M26.2 13.2 H4.3 M13.1 4.3 L4.2 13.2 L13.1 22.1" stroke="#0f1c26" stroke-width="3.6" fill="none" stroke-linecap="round" stroke-linejoin="round"/></svg>
<div class="a" style="left:5px;top:581px;width:120px;height:1px;background:#000"></div>
<div class="a" style="left:181px;top:581px;width:480px;height:1px;background:#000"></div>
<div class="a" style="left:125px;top:603px;width:57px;height:1px;background:#000"></div>
<div class="a" style="left:124px;top:582px;width:1px;height:21px;background:#fff"></div>
<div class="a" style="left:181px;top:581px;width:1px;height:23px;background:#000"></div>
<div class="t" style="left:16px;top:585.69px;font-size:11px;line-height:15px;font-weight:400;color:#000;letter-spacing:0.42px">Descriptions /Notes</div>
<div class="t" style="left:132.5px;top:585.69px;font-size:11px;line-height:15px;font-weight:400;color:#2c2c38;letter-spacing:0.4px">Settings</div>
<div class="t" style="left:190px;top:585.69px;font-size:11px;line-height:15px;font-weight:400;color:#000;letter-spacing:0.35px">Cost price</div>
<div class="a" style="left:248px;top:585px;width:1px;height:18px;background:#333"></div>
<div class="t" style="left:255px;top:585.69px;font-size:11px;line-height:15px;font-weight:400;color:#000;letter-spacing:0.3px">Error / Improvements</div>
<div class="a" style="left:372px;top:585px;width:1px;height:18px;background:#333"></div>
<div class="t" style="left:380.5px;top:585.69px;font-size:11px;line-height:15px;font-weight:400;color:#000;letter-spacing:-0.12px">Summary</div>
<div class="a" style="left:436px;top:585px;width:1px;height:18px;background:#333"></div>
<div class="t" style="left:445px;top:585.69px;font-size:11px;line-height:15px;font-weight:400;color:#000;letter-spacing:0.4px">Usage</div>
<div class="a" style="left:483px;top:585px;width:1px;height:18px;background:#333"></div>
<div class="a" style="left:661px;top:0px;width:9px;height:614px;background:#000"></div>
<div class="a" style="left:0px;top:605px;width:670px;height:9px;background:#000"></div>
</body></html>
